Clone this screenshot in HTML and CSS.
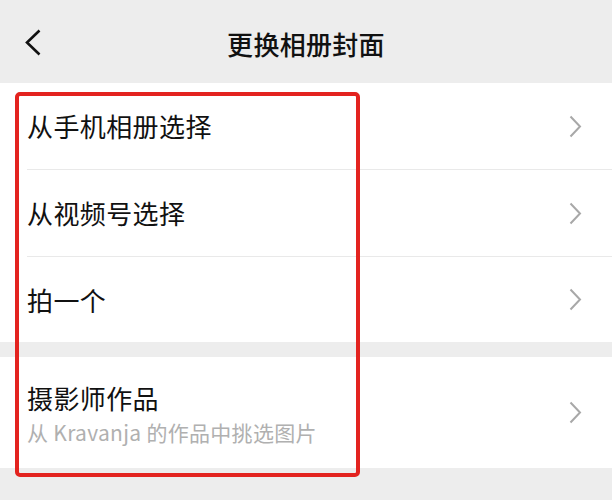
FILE: index.html
```html
<!DOCTYPE html>
<html lang="zh-CN">
<head>
<meta charset="utf-8">
<title>更换相册封面</title>
<link rel="stylesheet" href="styles.css">
</head>
<body>
<div class="page">
  <header class="header">
    <div class="back">
      <svg width="18" height="27" viewBox="0 0 18 27"><path d="M15.5 1.5 L3 13.5 L15.5 25.5" fill="none" stroke="#111" stroke-width="2.6" stroke-linecap="butt" stroke-linejoin="miter"/></svg>
    </div>
    <h1 class="title">更换相册封面</h1>
    <div></div>
  </header>

  <section class="group">
    <div class="row">
      <div class="row-inner">
        <span class="label">从手机相册选择</span>
        <svg class="chev" width="13" height="23" viewBox="0 0 13 23"><path d="M1.5 1.5 L11 11.5 L1.5 21.5" fill="none" stroke="#a8a8a8" stroke-width="2"/></svg>
      </div>
    </div>
    <div class="row">
      <div class="row-inner">
        <span class="label">从视频号选择</span>
        <svg class="chev" width="13" height="23" viewBox="0 0 13 23"><path d="M1.5 1.5 L11 11.5 L1.5 21.5" fill="none" stroke="#a8a8a8" stroke-width="2"/></svg>
      </div>
    </div>
    <div class="row">
      <div class="row-inner last short">
        <span class="label">拍一个</span>
        <svg class="chev" width="13" height="23" viewBox="0 0 13 23"><path d="M1.5 1.5 L11 11.5 L1.5 21.5" fill="none" stroke="#a8a8a8" stroke-width="2"/></svg>
      </div>
    </div>
  </section>

  <section class="group second">
    <div class="row">
      <div class="row-inner last tall">
        <div class="text">
          <span class="label">摄影师作品</span>
          <span class="sub">从 Kravanja 的作品中挑选图片</span>
        </div>
        <svg class="chev" width="13" height="23" viewBox="0 0 13 23"><path d="M1.5 1.5 L11 11.5 L1.5 21.5" fill="none" stroke="#a8a8a8" stroke-width="2"/></svg>
      </div>
    </div>
  </section>

  <div class="highlight"></div>
</div>
</body>
</html>
```

FILE: styles.css
```css
html, body {
  margin: 0;
  padding: 0;
  background: #ededed;
}
body {
  font-family: "Noto Sans CJK SC", "Noto Sans", sans-serif;
  color: #111;
}
.page {
  position: relative;
  width: 612px;
  height: 500px;
  overflow: hidden;
}
.header {
  height: 83px;
  display: grid;
  grid-template-columns: 1fr auto 1fr;
  align-items: center;
  padding-left: 24px;
  padding-right: 24px;
}
.back {
  display: flex;
  align-items: center;
  padding-top: 2px;
}
.title {
  margin: 0;
  font-size: 26px;
  font-weight: 500;
  line-height: 1;
  letter-spacing: 0.3px;
  color: #111;
  padding-top: 4px;
}
.group {
  background: #fff;
}
.group.second {
  margin-top: 15px;
}
.row {
  padding-left: 27px;
}
.row-inner {
  height: 86px;
  border-bottom: 1px solid #e9e9e9;
  display: flex;
  align-items: center;
  justify-content: space-between;
  padding-right: 30px;
}
.row-inner.last {
  border-bottom: none;
}
.row-inner.short {
  height: 85px;
}
.row-inner.tall {
  height: 111px;
}
.label {
  font-size: 26px;
  line-height: 32px;
  color: #111;
  letter-spacing: 0.4px;
}
.text {
  display: flex;
  flex-direction: column;
  gap: 3px;
  padding-top: 3px;
}
.sub {
  font-size: 21px;
  line-height: 30px;
  color: #b0b0b0;
  letter-spacing: 0.3px;
}
.chev {
  display: block;
}
.highlight {
  position: absolute;
  left: 15px;
  top: 92px;
  width: 337px;
  height: 377px;
  border: 4px solid #e3231f;
  border-radius: 5px;
}
```
